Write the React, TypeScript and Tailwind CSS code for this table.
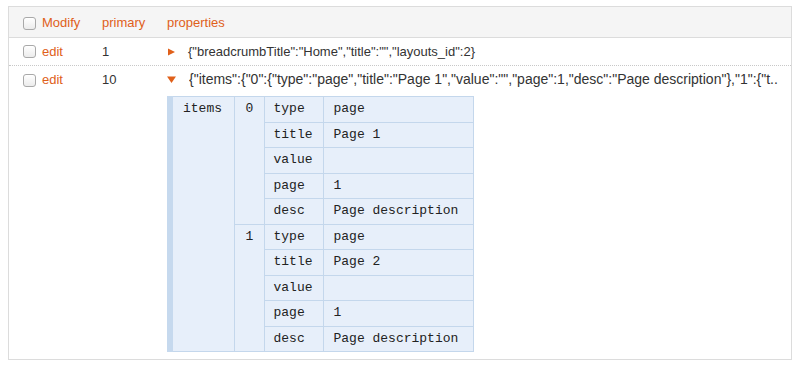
import React from "react";

const ORANGE = "text-[#e0601a]";

function Check() {
  return (
    <span className="inline-block w-[13px] h-[13px] rounded-[3px] border border-[#a9a9a9] bg-gradient-to-b from-white to-[#ececec] shadow-[inset_0_1px_0_#fff] shrink-0" />
  );
}

function RightTri() {
  return (
    <svg width="7" height="8" viewBox="0 0 7 8" className="shrink-0">
      <polygon points="0,0.5 7,4 0,7.5" fill="#e0601a" />
    </svg>
  );
}
function DownTri() {
  return (
    <svg width="9" height="7" viewBox="0 0 9 7" className="shrink-0">
      <polygon points="0,0.5 9,0.5 4.5,7" fill="#e0601a" />
    </svg>
  );
}

const mono = { fontFamily: '"Liberation Mono", "DejaVu Sans Mono", monospace' };

function Nested() {
  const groups = [
    { idx: "0", rows: [["type", "page"], ["title", "Page 1"], ["value", ""], ["page", "1"], ["desc", "Page description"]] },
    { idx: "1", rows: [["type", "page"], ["title", "Page 2"], ["value", ""], ["page", "1"], ["desc", "Page description"]] },
  ];
  const cell = "border border-[#c4d7ec] align-top px-0 h-[25.5px] leading-[24px]";
  return (
    <table className="border-collapse bg-[#e7effa] text-[13px] text-[#222]" style={mono}>
      <tbody>
        {groups.map((g, gi) =>
          g.rows.map((r, ri) => (
            <tr key={gi + "-" + ri}>
              {gi === 0 && ri === 0 && (
                <td rowSpan={10} className={`${cell} border-l-[6px] border-l-[#c6d9ee] w-[64px] pl-[10px]`}>
                  items
                </td>
              )}
              {ri === 0 && (
                <td rowSpan={5} className={`${cell} w-[30px] pl-[11px]`}>
                  {g.idx}
                </td>
              )}
              <td className={`${cell} w-[59px] pl-[9px]`}>{r[0]}</td>
              <td className={`${cell} w-[150px] pl-[10px] pr-[10px]`}>{r[1]}</td>
            </tr>
          ))
        )}
      </tbody>
    </table>
  );
}

export default function App() {
  return (
    <div
      className="w-[800px] h-[370px] bg-white pt-[6px] pl-[8px] text-[13px] text-[#333]"
      style={{ fontFamily: '"Liberation Sans", Arial, sans-serif' }}
    >
      <div className="w-[784px] border border-[#dcdcdc]">
        {/* header */}
        <div className="flex h-[31px] pt-[2px] items-center bg-[#f5f5f5] border-b border-[#dcdcdc]">
          <div className="w-[93px] flex items-center pl-[14px] gap-[6px]">
            <Check />
            <span className={ORANGE}>Modify</span>
          </div>
          <div className={`w-[65px] ${ORANGE}`}>primary</div>
          <div className={ORANGE}>properties</div>
        </div>
        {/* row 1 */}
        <div className="flex py-[4px] leading-[19px] border-b border-dotted border-[#c8c8c8]">
          <div className="w-[93px] flex items-center pl-[14px] gap-[6px]">
            <Check />
            <span className={ORANGE}>edit</span>
          </div>
          <div className="w-[65px]">1</div>
          <div className="flex items-center pl-[1px] gap-[13px]">
            <RightTri />
            <span>{'{"breadcrumbTitle":"Home","title":"","layouts_id":2}'}</span>
          </div>
        </div>
        {/* row 2 */}
        <div className="flex pt-[4px] pb-[7px] leading-[19px]">
          <div className="w-[93px] flex items-start pl-[14px] gap-[6px]">
            <span className="mt-[3px]"><Check /></span>
            <span className={ORANGE}>edit</span>
          </div>
          <div className="w-[65px]">10</div>
          <div className="flex-1 min-w-0">
            <div className="flex items-center gap-[13px]">
              <DownTri />
              <span className="whitespace-nowrap overflow-hidden text-[14px]">
                {'{"items":{"0":{"type":"page","title":"Page 1","value":"","page":1,"desc":"Page description"},"1":{"t..'}
              </span>
            </div>
            <div className="mt-[7px]">
              <Nested />
            </div>
          </div>
        </div>
      </div>
    </div>
  );
}
